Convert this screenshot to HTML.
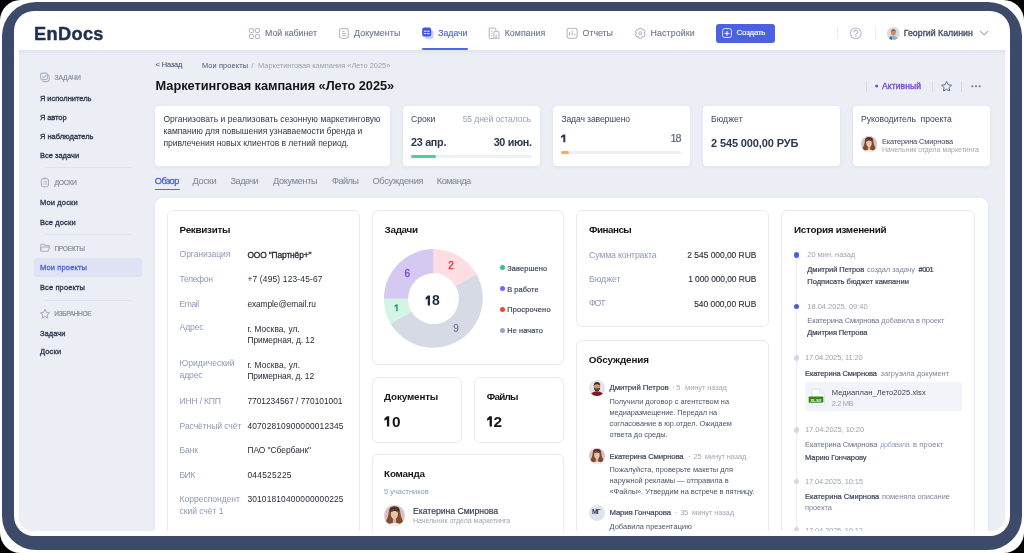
<!DOCTYPE html>
<html><head><meta charset="utf-8"><style>
html,body{margin:0;padding:0;width:1024px;height:553px;overflow:hidden;background:#000;position:relative}
body{font-family:"Liberation Sans",sans-serif}
.t{position:absolute;white-space:nowrap}
.page{position:absolute;left:0;top:0;width:1024px;height:553px;will-change:transform}
.corner{position:absolute;left:0;top:0;width:1024px;height:553px;background:#fff;border-radius:20.5px}
.frame{position:absolute;left:1.8px;top:2.4px;width:1020.4px;height:547.8px;background:#3e4a6a;border-radius:34px}
.screen{position:absolute;left:14px;top:11px;width:996px;height:525.4px;background:#fff;border-radius:20px}
.content{position:absolute;left:19px;top:50px;width:985.5px;height:480.8px;background:#eceef6;border-radius:0 0 14px 14px;box-shadow:inset 0 3px 5px -2px rgba(60,70,110,0.10)}
.clip{position:absolute;left:0;top:0;width:1024px;height:530.8px;overflow:hidden}
</style></head><body>
<div class="corner"></div>
<div class="page">
<div class="frame"></div>
<div class="screen"></div>
<div class="content"></div>
<div class="t" id="logo" style="left:34.00px;top:24.62px;font-size:18.2px;line-height:18.2px;color:#1f3050;font-weight:700;letter-spacing:0.351px;-webkit-text-stroke:0.45px #1f3050;">EnDocs</div>
<div class="t" id="n1" style="left:265.00px;top:28.65px;font-size:8.8px;line-height:8.8px;color:#6e7689;font-weight:400;letter-spacing:-0.007px;-webkit-text-stroke:0.12px #6e7689;">Мой кабинет</div>
<div class="t" id="n2" style="left:354.00px;top:28.65px;font-size:8.8px;line-height:8.8px;color:#6e7689;font-weight:400;letter-spacing:0.109px;-webkit-text-stroke:0.12px #6e7689;">Документы</div>
<div class="t" id="n3" style="left:438.30px;top:28.65px;font-size:8.8px;line-height:8.8px;color:#4a5fe0;font-weight:400;letter-spacing:-0.085px;-webkit-text-stroke:0.12px #4a5fe0;">Задачи</div>
<div class="t" id="n4" style="left:504.70px;top:28.65px;font-size:8.8px;line-height:8.8px;color:#6e7689;font-weight:400;letter-spacing:0.055px;-webkit-text-stroke:0.12px #6e7689;">Компания</div>
<div class="t" id="n5" style="left:582.60px;top:28.65px;font-size:8.8px;line-height:8.8px;color:#6e7689;font-weight:400;letter-spacing:-0.018px;-webkit-text-stroke:0.12px #6e7689;">Отчеты</div>
<div class="t" id="n6" style="left:650.60px;top:28.65px;font-size:8.8px;line-height:8.8px;color:#6e7689;font-weight:400;letter-spacing:0.109px;-webkit-text-stroke:0.12px #6e7689;">Настройки</div>
<div style="position:absolute;left:422.00px;top:48.00px;width:46.00px;height:2.00px;background:#5266e6;border-radius:1px"></div>
<div style="position:absolute;left:716.00px;top:23.60px;width:59.00px;height:19.40px;background:#4c60e2;border-radius:3px"></div>
<div class="t" id="n7" style="left:736.60px;top:29.37px;font-size:7.9px;line-height:7.9px;color:#ffffff;font-weight:400;letter-spacing:-0.190px;-webkit-text-stroke:0.15px #ffffff;">Создать</div>
<div style="position:absolute;left:837.00px;top:27.00px;width:1.00px;height:12.00px;background:#e8eaf0"></div>
<div style="position:absolute;left:874.50px;top:27.00px;width:1.00px;height:12.00px;background:#e8eaf0"></div>
<div class="t" id="user" style="left:903.80px;top:28.85px;font-size:8.8px;line-height:8.8px;color:#3b4560;font-weight:400;letter-spacing:-0.003px;-webkit-text-stroke:0.28px #3b4560;">Георгий Калинин</div>
<svg style="position:absolute;left:0;top:0" width="1024" height="60" viewBox="0 0 1024 60">
<g fill="none" stroke="#b0b7c8" stroke-width="1.05">
 <rect x="249.4" y="28.4" width="4" height="4" rx="1.2"/><rect x="255.4" y="28.4" width="4" height="4" rx="1.2"/>
 <rect x="249.4" y="34.4" width="4" height="4" rx="1.2"/><rect x="255.4" y="34.4" width="4" height="4" rx="1.2"/>
 <rect x="339.6" y="28.4" width="8.7" height="9.8" rx="2.2"/>
 <path d="M342 31.3h2.5M342 33.4h3.9M342 35.4h3.9"/>
 <path d="M495.8 30.6V29.6a1.6 1.6 0 0 0-1.6-1.6h-3.4a1.6 1.6 0 0 0-1.6 1.6v7.4a1.4 1.4 0 0 0 1.4 1.4h3.2M493.9 38.2V32.6a1.4 1.4 0 0 1 1.4-1.4h2.2a1.4 1.4 0 0 1 1.4 1.4v5.6zM496.2 38.2v-3.6M490.9 31h1.4M490.9 33.4h1.4M490.9 35.8h1.4"/>
 <rect x="567.1" y="28.2" width="10" height="10.1" rx="2.2"/>
 <path d="M569.6 32v3.6M572.2 30.6v5M574.7 33.5v2.1"/>
 <path d="M638.35 29.82 L639.15 28.23 L641.45 28.23 L642.25 29.82 L644.03 29.72 L645.18 31.71 L644.20 33.20 L645.18 34.69 L644.03 36.68 L642.25 36.58 L641.45 38.17 L639.15 38.17 L638.35 36.58 L636.57 36.68 L635.42 34.69 L636.40 33.20 L635.42 31.71 L636.57 29.72Z" stroke-linejoin="round"/>
 <circle cx="640.3" cy="33.2" r="1.5"/>
 <circle cx="855.8" cy="33.35" r="5.4"/>
 <path d="M854 31.9a1.9 1.9 0 1 1 2.7 1.7c-.6.3-.9.7-.9 1.3v.4M855.8 36.6v.3" stroke-linecap="round"/>
 <path d="M980.6 31.3l3.6 3.5 3.6-3.5" stroke="#9aa3b8" stroke-linecap="round"/>
</g>
<rect x="424.6" y="30" width="9" height="9" rx="2.2" fill="#c9d0fa"/>
<rect x="422.2" y="27.6" width="9" height="9" rx="2.2" fill="#3f56e0"/>
<path d="M424.3 31.2h1.8M427.4 31.2h1.8M424.3 33.6h1.8M427.4 33.6h1.8" stroke="#fff" stroke-width="0.9" stroke-linecap="round"/>
<rect x="722.6" y="28.6" width="8.8" height="8.9" rx="2" fill="none" stroke="#dfe4ff" stroke-width="1"/>
<path d="M727 31.4v4M725 33.4h4" stroke="#fff" stroke-width="1" stroke-linecap="round"/>
</svg>
<svg style="position:absolute;left:886.9px;top:26.9px" width="12.8" height="12.8" viewBox="0 0 20 20">
<defs><clipPath id="ca1"><circle cx="10" cy="10" r="10"/></clipPath></defs>
<g clip-path="url(#ca1)"><rect width="20" height="20" fill="#d9d9de"/>
<path d="M3 21c0-5 3-7 7-7s7 2 7 7z" fill="#8fb0cf"/><path d="M3 21c0-5 2-6 4-6.5L8 21z" fill="#4a5a70"/>
<ellipse cx="10" cy="9" rx="3.6" ry="4.3" fill="#c98a5e"/><path d="M6.3 8c0-3 1.6-4.3 3.7-4.3S13.7 5 13.7 8c-1-1.6-2-2-3.7-2s-2.7.4-3.7 2z" fill="#7a4f33"/></g>
</svg>
<div class="t" id="s_h1" style="left:54.40px;top:74.81px;font-size:6.8px;line-height:6.8px;color:#868d9f;font-weight:400;letter-spacing:-0.076px;-webkit-text-stroke:0.2px #868d9f;">ЗАДАЧИ</div>
<div class="t" id="s1" style="left:39.90px;top:94.92px;font-size:7.5px;line-height:7.5px;color:#2b364e;font-weight:400;letter-spacing:-0.014px;-webkit-text-stroke:0.3px #2b364e;">Я исполнитель</div>
<div class="t" id="s2" style="left:39.90px;top:113.82px;font-size:7.5px;line-height:7.5px;color:#2b364e;font-weight:400;letter-spacing:-0.083px;-webkit-text-stroke:0.3px #2b364e;">Я автор</div>
<div class="t" id="s3" style="left:39.90px;top:132.82px;font-size:7.5px;line-height:7.5px;color:#2b364e;font-weight:400;letter-spacing:0.007px;-webkit-text-stroke:0.3px #2b364e;">Я наблюдатель</div>
<div class="t" id="s4" style="left:39.90px;top:151.82px;font-size:7.5px;line-height:7.5px;color:#2b364e;font-weight:400;letter-spacing:0.011px;-webkit-text-stroke:0.3px #2b364e;">Все задачи</div>
<div style="position:absolute;left:45.00px;top:167.00px;width:87.00px;height:1.00px;background:#e1e4ee"></div>
<div class="t" id="s_h2" style="left:54.40px;top:179.91px;font-size:6.8px;line-height:6.8px;color:#868d9f;font-weight:400;letter-spacing:-0.299px;-webkit-text-stroke:0.2px #868d9f;">ДОСКИ</div>
<div class="t" id="s5" style="left:39.90px;top:199.32px;font-size:7.5px;line-height:7.5px;color:#2b364e;font-weight:400;letter-spacing:0.155px;-webkit-text-stroke:0.3px #2b364e;">Мои доски</div>
<div class="t" id="s6" style="left:39.90px;top:218.72px;font-size:7.5px;line-height:7.5px;color:#2b364e;font-weight:400;letter-spacing:0.113px;-webkit-text-stroke:0.3px #2b364e;">Все доски</div>
<div style="position:absolute;left:45.00px;top:234.00px;width:87.00px;height:1.00px;background:#e1e4ee"></div>
<div class="t" id="s_h3" style="left:54.40px;top:246.05px;font-size:6.5px;line-height:6.5px;color:#868d9f;font-weight:400;letter-spacing:-0.191px;-webkit-text-stroke:0.2px #868d9f;">ПРОЕКТЫ</div>
<div style="position:absolute;left:34.00px;top:258.00px;width:108.40px;height:19.00px;background:#dee3f4;border-radius:3px"></div>
<div class="t" id="s7" style="left:39.90px;top:264.42px;font-size:7.5px;line-height:7.5px;color:#4a5fe0;font-weight:400;letter-spacing:0.156px;-webkit-text-stroke:0.3px #4a5fe0;">Мои проекты</div>
<div class="t" id="s8" style="left:39.90px;top:283.72px;font-size:7.5px;line-height:7.5px;color:#2b364e;font-weight:400;letter-spacing:0.126px;-webkit-text-stroke:0.3px #2b364e;">Все проекты</div>
<div style="position:absolute;left:45.00px;top:299.50px;width:87.00px;height:1.00px;background:#e1e4ee"></div>
<div class="t" id="s_h4" style="left:54.30px;top:311.15px;font-size:6.5px;line-height:6.5px;color:#868d9f;font-weight:400;letter-spacing:-0.335px;-webkit-text-stroke:0.2px #868d9f;">ИЗБРАННОЕ</div>
<div class="t" id="s9" style="left:39.90px;top:329.52px;font-size:7.5px;line-height:7.5px;color:#2b364e;font-weight:400;letter-spacing:0.056px;-webkit-text-stroke:0.3px #2b364e;">Задачи</div>
<div class="t" id="s10" style="left:39.90px;top:348.42px;font-size:7.5px;line-height:7.5px;color:#2b364e;font-weight:400;letter-spacing:0.183px;-webkit-text-stroke:0.3px #2b364e;">Доски</div>
<svg style="position:absolute;left:0;top:60px" width="60" height="270" viewBox="0 60 60 270">
<g fill="none" stroke="#a9b0c2" stroke-width="1.05" stroke-linejoin="round" stroke-linecap="round">
 <path d="M47.6 74.8a2 2 0 0 1 1.6 2v2.8a2 2 0 0 1-2 2H44a2 2 0 0 1-2-1.6"/>
 <rect x="40.6" y="73.1" width="6.8" height="6.5" rx="1.8"/>
 <path d="M42.6 76.6l1.2 1.1 2-2.2"/>
 <rect x="41.3" y="178.7" width="7.2" height="8" rx="1.6"/>
 <path d="M43.5 178.7v-.6h2.8v.6M43.3 181.8h.2M45.2 181.8h1.6M43.3 184h.2M45.2 184h1.6"/>
 <path d="M40.6 250.4v-5a1.2 1.2 0 0 1 1.2-1.2h2.4l1.2 1.4h3a1.2 1.2 0 0 1 1.2 1.2v.8M40.6 250.4l1.6-3.4h7.4l-1.6 4.2h-6.6a.8.8 0 0 1-.8-.8z"/>
 <path d="M45 309.4l1.4 2.9 3.1.4-2.3 2.2.6 3.1-2.8-1.5-2.8 1.5.6-3.1-2.3-2.2 3.1-.4z"/>
</g></svg>
<div class="t" id="back" style="left:155.60px;top:60.83px;font-size:7.4px;line-height:7.4px;color:#3d4a66;font-weight:400;letter-spacing:-0.131px;-webkit-text-stroke:0.05px #3d4a66;">&lt; Назад</div>
<div class="t" id="bc1" style="left:202.00px;top:61.83px;font-size:7.4px;line-height:7.4px;color:#4a5570;font-weight:400;letter-spacing:0.108px;">Мои проекты</div>
<div class="t" id="bc2" style="left:251.50px;top:61.53px;font-size:7.4px;line-height:7.4px;color:#9098a8;font-weight:400;letter-spacing:0.000px;">/</div>
<div class="t" id="bc3" style="left:258.10px;top:61.53px;font-size:7.4px;line-height:7.4px;color:#9aa1b0;font-weight:400;letter-spacing:0.014px;">Маркетинговая кампания «Лето 2025»</div>
<div class="t" id="title" style="left:155.60px;top:79.63px;font-size:12.8px;line-height:12.8px;color:#151515;font-weight:700;letter-spacing:-0.054px;">Маркетинговая кампания «Лето 2025»</div>
<div style="position:absolute;left:866.30px;top:80.50px;width:1.00px;height:11.70px;background:#d8dbe5"></div>
<div style="position:absolute;left:931.50px;top:80.50px;width:1.00px;height:11.70px;background:#d8dbe5"></div>
<div style="position:absolute;left:961.00px;top:80.50px;width:1.00px;height:11.70px;background:#d8dbe5"></div>
<svg style="position:absolute;left:870px;top:80px" width="12" height="12" viewBox="870 80 12 12"><circle cx="876.7" cy="86.1" r="1.5" fill="#7b4fd4"/></svg>
<div class="t" id="active" style="left:881.90px;top:82.28px;font-size:8.6px;line-height:8.6px;color:#7a4ed3;font-weight:400;letter-spacing:0.086px;-webkit-text-stroke:0.35px #7a4ed3;">Активный</div>
<svg style="position:absolute;left:930px;top:75px" width="60" height="22" viewBox="930 75 60 22">
<path d="M946.6 81.5l1.6 3.2 3.4.5-2.5 2.4.6 3.4-3.1-1.6-3.1 1.6.6-3.4-2.5-2.4 3.4-.5z" fill="none" stroke="#5d6782" stroke-width="1" stroke-linejoin="round"/>
<circle cx="972.3" cy="86.2" r="1" fill="#6b7388"/><circle cx="976" cy="86.2" r="1" fill="#6b7388"/><circle cx="979.7" cy="86.2" r="1" fill="#6b7388"/>
</svg>
<div style="position:absolute;left:154.90px;top:105.50px;width:235.60px;height:60.70px;background:#fff;border-radius:4px;box-shadow:0 1px 4px rgba(40,50,90,0.07)"></div>
<div style="position:absolute;left:402.90px;top:105.50px;width:137.00px;height:60.70px;background:#fff;border-radius:4px;box-shadow:0 1px 4px rgba(40,50,90,0.07)"></div>
<div style="position:absolute;left:552.90px;top:105.50px;width:137.00px;height:60.70px;background:#fff;border-radius:4px;box-shadow:0 1px 4px rgba(40,50,90,0.07)"></div>
<div style="position:absolute;left:702.90px;top:105.50px;width:137.00px;height:60.70px;background:#fff;border-radius:4px;box-shadow:0 1px 4px rgba(40,50,90,0.07)"></div>
<div style="position:absolute;left:852.90px;top:105.50px;width:137.00px;height:60.70px;background:#fff;border-radius:4px;box-shadow:0 1px 4px rgba(40,50,90,0.07)"></div>
<div class="t" id="d1" style="left:163.40px;top:115.49px;font-size:8.5px;line-height:8.5px;color:#2e3546;font-weight:400;letter-spacing:0.044px;">Организовать и реализовать сезонную маркетинговую</div>
<div class="t" id="d2" style="left:163.40px;top:127.39px;font-size:8.5px;line-height:8.5px;color:#2e3546;font-weight:400;letter-spacing:-0.024px;">кампанию для повышения узнаваемости бренда и</div>
<div class="t" id="d3" style="left:163.40px;top:139.19px;font-size:8.5px;line-height:8.5px;color:#2e3546;font-weight:400;letter-spacing:-0.010px;">привлечения новых клиентов в летний период.</div>
<div class="t" id="c1a" style="left:411.00px;top:114.98px;font-size:8.6px;line-height:8.6px;color:#3c4559;font-weight:400;letter-spacing:0.025px;">Сроки</div>
<div class="t" id="c1b" style="left:462.70px;top:114.98px;font-size:8.6px;line-height:8.6px;color:#9aa0ae;font-weight:400;letter-spacing:-0.112px;">55 дней осталось</div>
<div class="t" id="c1c" style="left:411.00px;top:136.99px;font-size:10.8px;line-height:10.8px;color:#2a3550;font-weight:700;letter-spacing:-0.291px;">23 апр.</div>
<div class="t" id="c1d" style="left:493.70px;top:136.99px;font-size:10.8px;line-height:10.8px;color:#2a3550;font-weight:700;letter-spacing:-0.345px;">30 июн.</div>
<div style="position:absolute;left:411.00px;top:154.90px;width:120.50px;height:3.00px;background:#eef0f5;border-radius:2px"></div>
<div style="position:absolute;left:411.00px;top:154.90px;width:24.90px;height:3.00px;background:#45d39a;border-radius:2px"></div>
<div class="t" id="c2a" style="left:561.40px;top:114.98px;font-size:8.6px;line-height:8.6px;color:#3c4559;font-weight:400;letter-spacing:-0.123px;">Задач завершено</div>
<svg style="position:absolute;left:0;top:0;overflow:visible" width="1" height="1"><path d="M563.30 134.50H565.30V142.30H563.30V136.84L561.00 137.93V136.22Z" fill="#2a3550"/></svg>
<div class="t" id="c2c" style="left:670.40px;top:133.49px;font-size:10.8px;line-height:10.8px;color:#5c6680;font-weight:400;letter-spacing:-0.838px;-webkit-text-stroke:0.2px #5c6680;">18</div>
<div style="position:absolute;left:561.40px;top:150.50px;width:120.10px;height:3.00px;background:#eef0f5;border-radius:2px"></div>
<div style="position:absolute;left:561.40px;top:150.50px;width:7.60px;height:3.00px;background:#ebb06c;border-radius:2px"></div>
<div class="t" id="c3a" style="left:711.00px;top:114.98px;font-size:8.6px;line-height:8.6px;color:#3c4559;font-weight:400;letter-spacing:0.103px;">Бюджет</div>
<div class="t" id="c3b" style="left:711.00px;top:137.86px;font-size:11px;line-height:11px;color:#2a3550;font-weight:700;letter-spacing:-0.126px;">2 545 000,00 РУБ</div>
<div class="t" id="c4a" style="left:861.00px;top:115.28px;font-size:8.6px;line-height:8.6px;color:#3c4559;font-weight:400;letter-spacing:-0.040px;">Руководитель&nbsp; проекта</div>
<div class="t" id="c4b" style="left:881.90px;top:137.66px;font-size:7.39px;line-height:7.39px;color:#3c4559;font-weight:400;letter-spacing:-0.088px;">Екатерина Смирнова</div>
<div class="t" id="c4c" style="left:881.90px;top:145.89px;font-size:7.0px;line-height:7.0px;color:#a0a6b4;font-weight:400;letter-spacing:-0.030px;">Начельник отдела маркетинга</div>
<svg style="position:absolute;left:861.00px;top:136.00px" width="16.2" height="16.2" viewBox="0 0 20 20">
<defs><clipPath id="cw1"><circle cx="10" cy="10" r="10"/></clipPath></defs>
<g clip-path="url(#cw1)"><rect width="20" height="20" fill="#dcc1c9"/>
<path d="M10 1.4C6.3 1.4 4.6 4 4.4 7.6 4.2 10.6 3 12.8 1.9 15.4 2.9 17 4.6 17.8 6.4 17.6L13.6 17.6C15.4 17.8 17.1 17 18.1 15.4 17 12.8 15.8 10.6 15.6 7.6 15.4 4 13.7 1.4 10 1.4Z" fill="#7e4d2e"/>
<ellipse cx="10" cy="4.2" rx="4.6" ry="2.8" fill="#4d3224"/>
<rect x="8.5" y="11.8" width="3" height="5" fill="#d9b09a"/>
<path d="M4.6 20.5c.8-2.6 2.8-3.9 5.4-3.9s4.6 1.3 5.4 3.9z" fill="#f0eaec"/>
<ellipse cx="9.9" cy="8.6" rx="3.4" ry="4.7" fill="#e8c4b0"/>
<path d="M6.7 7c.5-2.2 1.6-3.3 3.3-3.3s2.8 1.1 3.3 3.3c-.9-.9-2-1.4-3.3-1.4s-2.4.5-3.3 1.4z" fill="#4d3224"/>
</g></svg>
<div class="t" id="tb1" style="left:154.80px;top:176.70px;font-size:9.2px;line-height:9.2px;color:#4a5fe0;font-weight:400;letter-spacing:-0.515px;-webkit-text-stroke:0.3px #4a5fe0;">Обзор</div>
<div class="t" id="tb2" style="left:192.50px;top:176.70px;font-size:9.2px;line-height:9.2px;color:#868c9e;font-weight:400;letter-spacing:-0.252px;-webkit-text-stroke:0.1px #868c9e;">Доски</div>
<div class="t" id="tb3" style="left:230.60px;top:176.70px;font-size:9.2px;line-height:9.2px;color:#868c9e;font-weight:400;letter-spacing:-0.543px;-webkit-text-stroke:0.1px #868c9e;">Задачи</div>
<div class="t" id="tb4" style="left:273.10px;top:176.70px;font-size:9.2px;line-height:9.2px;color:#868c9e;font-weight:400;letter-spacing:-0.344px;-webkit-text-stroke:0.1px #868c9e;">Документы</div>
<div class="t" id="tb5" style="left:332.10px;top:176.70px;font-size:9.2px;line-height:9.2px;color:#868c9e;font-weight:400;letter-spacing:-0.613px;-webkit-text-stroke:0.1px #868c9e;">Файлы</div>
<div class="t" id="tb6" style="left:372.40px;top:176.70px;font-size:9.2px;line-height:9.2px;color:#868c9e;font-weight:400;letter-spacing:-0.256px;-webkit-text-stroke:0.1px #868c9e;">Обсуждения</div>
<div class="t" id="tb7" style="left:436.80px;top:176.70px;font-size:9.2px;line-height:9.2px;color:#868c9e;font-weight:400;letter-spacing:-0.513px;-webkit-text-stroke:0.1px #868c9e;">Команда</div>
<div style="position:absolute;left:154.80px;top:188.80px;width:24.80px;height:1.50px;background:#5266e6;border-radius:1px"></div>
<div class="clip">
<div style="position:absolute;left:154.60px;top:197.70px;width:833.40px;height:402.30px;background:#fff;border-radius:8px;box-shadow:0 0 3px rgba(50,60,100,0.06)"></div>
<div style="position:absolute;left:167.40px;top:210.00px;width:192.40px;height:430.00px;background:#fff;border:1px solid #e8eaf2;border-radius:6px;box-sizing:border-box"></div>
<div style="position:absolute;left:371.80px;top:210.30px;width:192.60px;height:154.30px;background:#fff;border:1px solid #e8eaf2;border-radius:6px;box-sizing:border-box"></div>
<div style="position:absolute;left:371.80px;top:377.00px;width:89.80px;height:65.50px;background:#fff;border:1px solid #e8eaf2;border-radius:6px;box-sizing:border-box"></div>
<div style="position:absolute;left:474.40px;top:377.00px;width:90.00px;height:65.50px;background:#fff;border:1px solid #e8eaf2;border-radius:6px;box-sizing:border-box"></div>
<div style="position:absolute;left:371.80px;top:454.30px;width:192.60px;height:185.70px;background:#fff;border:1px solid #e8eaf2;border-radius:6px;box-sizing:border-box"></div>
<div style="position:absolute;left:576.40px;top:210.30px;width:192.20px;height:117.10px;background:#fff;border:1px solid #e8eaf2;border-radius:6px;box-sizing:border-box"></div>
<div style="position:absolute;left:576.40px;top:340.00px;width:192.20px;height:300.00px;background:#fff;border:1px solid #e8eaf2;border-radius:6px;box-sizing:border-box"></div>
<div style="position:absolute;left:781.20px;top:210.30px;width:193.40px;height:429.70px;background:#fff;border:1px solid #e8eaf2;border-radius:6px;box-sizing:border-box"></div>
<div class="t" id="rq" style="left:179.60px;top:224.88px;font-size:9.87px;line-height:9.87px;color:#151515;font-weight:700;letter-spacing:-0.273px;">Реквизиты</div>
<div class="t" id="rl0" style="left:179.60px;top:249.98px;font-size:8.6px;line-height:8.6px;color:#8f99b6;font-weight:400;letter-spacing:-0.104px;">Организация</div>
<div class="t" id="rv0_0" style="left:247.40px;top:251.40px;font-size:8.4px;line-height:8.4px;color:#1f2430;font-weight:400;letter-spacing:-0.125px;-webkit-text-stroke:0.3px #1f2430;">ООО "Партнёр+"</div>
<div class="t" id="rl1" style="left:179.60px;top:275.28px;font-size:8.6px;line-height:8.6px;color:#8f99b6;font-weight:400;letter-spacing:-0.389px;">Телефон</div>
<div class="t" id="rv1_0" style="left:247.40px;top:275.40px;font-size:8.4px;line-height:8.4px;color:#1f2430;font-weight:400;letter-spacing:0.187px;">+7 (495) 123-45-67</div>
<div class="t" id="rl2" style="left:179.60px;top:300.48px;font-size:8.6px;line-height:8.6px;color:#8f99b6;font-weight:400;letter-spacing:-0.492px;">Email</div>
<div class="t" id="rv2_0" style="left:247.40px;top:300.10px;font-size:8.4px;line-height:8.4px;color:#1f2430;font-weight:400;letter-spacing:-0.095px;">example@email.ru</div>
<div class="t" id="rl3" style="left:179.60px;top:323.28px;font-size:8.6px;line-height:8.6px;color:#8f99b6;font-weight:400;letter-spacing:-0.145px;">Адрес</div>
<div class="t" id="rv3_0" style="left:247.40px;top:324.80px;font-size:8.4px;line-height:8.4px;color:#1f2430;font-weight:400;letter-spacing:0.105px;">г. Москва, ул.</div>
<div class="t" id="rv3_1" style="left:247.40px;top:336.20px;font-size:8.4px;line-height:8.4px;color:#1f2430;font-weight:400;letter-spacing:-0.033px;">Примерная, д. 12</div>
<div class="t" id="rl4" style="left:179.60px;top:359.08px;font-size:8.6px;line-height:8.6px;color:#8f99b6;font-weight:400;letter-spacing:0.003px;">Юридический</div>
<div class="t" id="rv4_0" style="left:247.40px;top:360.50px;font-size:8.4px;line-height:8.4px;color:#1f2430;font-weight:400;letter-spacing:0.124px;">г. Москва, ул.</div>
<div class="t" id="rv4_1" style="left:247.40px;top:372.30px;font-size:8.4px;line-height:8.4px;color:#1f2430;font-weight:400;letter-spacing:-0.070px;">Примерная, д. 12</div>
<div class="t" id="rl5" style="left:179.60px;top:396.88px;font-size:8.6px;line-height:8.6px;color:#8f99b6;font-weight:400;letter-spacing:-0.221px;">ИНН / КПП</div>
<div class="t" id="rv5_0" style="left:247.40px;top:397.00px;font-size:8.4px;line-height:8.4px;color:#1f2430;font-weight:400;letter-spacing:-0.017px;">7701234567 / 770101001</div>
<div class="t" id="rl6" style="left:179.60px;top:421.98px;font-size:8.6px;line-height:8.6px;color:#8f99b6;font-weight:400;letter-spacing:-0.106px;">Расчётный счёт</div>
<div class="t" id="rv6_0" style="left:247.40px;top:421.80px;font-size:8.4px;line-height:8.4px;color:#1f2430;font-weight:400;letter-spacing:0.157px;">40702810900000012345</div>
<div class="t" id="rl7" style="left:179.60px;top:446.08px;font-size:8.6px;line-height:8.6px;color:#8f99b6;font-weight:400;letter-spacing:-0.192px;">Банк</div>
<div class="t" id="rv7_0" style="left:247.40px;top:446.10px;font-size:8.4px;line-height:8.4px;color:#1f2430;font-weight:400;letter-spacing:-0.013px;">ПАО "Сбербанк"</div>
<div class="t" id="rl8" style="left:179.60px;top:470.78px;font-size:8.6px;line-height:8.6px;color:#8f99b6;font-weight:400;letter-spacing:-0.637px;">БИК</div>
<div class="t" id="rv8_0" style="left:247.40px;top:470.60px;font-size:8.4px;line-height:8.4px;color:#1f2430;font-weight:400;letter-spacing:0.271px;">044525225</div>
<div class="t" id="rl9" style="left:179.60px;top:495.18px;font-size:8.6px;line-height:8.6px;color:#8f99b6;font-weight:400;letter-spacing:-0.062px;">Корреспондент</div>
<div class="t" id="rv9_0" style="left:247.40px;top:495.00px;font-size:8.4px;line-height:8.4px;color:#1f2430;font-weight:400;letter-spacing:0.157px;">30101810400000000225</div>
<div class="t" id="rl_adr" style="left:179.60px;top:370.58px;font-size:8.6px;line-height:8.6px;color:#8f99b6;font-weight:400;letter-spacing:-0.162px;">адрес</div>
<div class="t" id="rl_ks" style="left:179.60px;top:506.98px;font-size:8.6px;line-height:8.6px;color:#8f99b6;font-weight:400;letter-spacing:-0.079px;">ский счёт 1</div>
<div class="t" id="zt" style="left:384.60px;top:224.98px;font-size:9.87px;line-height:9.87px;color:#151515;font-weight:700;letter-spacing:-0.299px;">Задачи</div>
<svg style="position:absolute;left:0;top:0" width="1024" height="553"><path d="M433.50 249.10A49.6 49.6 0 0 1 476.45 273.90L455.50 286.00A25.4 25.4 0 0 0 433.50 273.30Z" fill="#ffdde2"/><path d="M476.45 273.90A49.6 49.6 0 0 1 390.55 323.50L411.50 311.40A25.4 25.4 0 0 0 455.50 286.00Z" fill="#d6dae4"/><path d="M390.55 323.50A49.6 49.6 0 0 1 383.90 298.70L408.10 298.70A25.4 25.4 0 0 0 411.50 311.40Z" fill="#d2f5e6"/><path d="M383.90 298.70A49.6 49.6 0 0 1 433.50 249.10L433.50 273.30A25.4 25.4 0 0 0 408.10 298.70Z" fill="#d6c9f1"/></svg>
<div class="t" id="dn6" style="left:404.60px;top:268.69px;font-size:10px;line-height:10px;color:#7a4fd0;font-weight:400;letter-spacing:0.000px;-webkit-text-stroke:0.4px #7a4fd0;">6</div>
<div class="t" id="dn2" style="left:448.20px;top:261.39px;font-size:10px;line-height:10px;color:#e5393f;font-weight:400;letter-spacing:0.000px;-webkit-text-stroke:0.4px #e5393f;">2</div>
<svg style="position:absolute;left:0;top:0;overflow:visible" width="1" height="1"><path d="M396.20 304.20H397.70V311.20H396.20V306.30L394.50 307.28V305.74Z" fill="#2a9d6a"/></svg>
<div class="t" id="dn9" style="left:453.30px;top:323.89px;font-size:10px;line-height:10px;color:#6b7590;font-weight:400;letter-spacing:0.000px;-webkit-text-stroke:0.15px #6b7590;">9</div>
<svg style="position:absolute;left:0;top:0;overflow:visible" width="1" height="1"><path d="M427.70 295.60H430.00V305.40H427.70V298.54L425.60 299.91V297.76Z" fill="#1e2a45"/></svg>
<div class="t" id="dn18" style="left:432.10px;top:293.47px;font-size:14px;line-height:14px;color:#1e2a45;font-weight:700;letter-spacing:0.000px;">8</div>
<div style="position:absolute;left:499.50px;top:265.30px;width:5px;height:5px;border-radius:50%;background:#34c48a"></div>
<div class="t" id="lg0" style="left:507.20px;top:264.53px;font-size:7.4px;line-height:7.4px;color:#3c4559;font-weight:400;letter-spacing:0.117px;-webkit-text-stroke:0.2px #3c4559;">Завершено</div>
<div style="position:absolute;left:499.50px;top:286.30px;width:5px;height:5px;border-radius:50%;background:#8b5cf6"></div>
<div class="t" id="lg1" style="left:507.20px;top:285.53px;font-size:7.4px;line-height:7.4px;color:#3c4559;font-weight:400;letter-spacing:0.073px;-webkit-text-stroke:0.2px #3c4559;">В работе</div>
<div style="position:absolute;left:499.50px;top:307.10px;width:5px;height:5px;border-radius:50%;background:#f04438"></div>
<div class="t" id="lg2" style="left:507.20px;top:306.33px;font-size:7.4px;line-height:7.4px;color:#3c4559;font-weight:400;letter-spacing:0.210px;-webkit-text-stroke:0.2px #3c4559;">Просрочено</div>
<div style="position:absolute;left:499.50px;top:328.20px;width:5px;height:5px;border-radius:50%;background:#9aa3b8"></div>
<div class="t" id="lg3" style="left:507.20px;top:327.43px;font-size:7.4px;line-height:7.4px;color:#3c4559;font-weight:400;letter-spacing:0.106px;-webkit-text-stroke:0.2px #3c4559;">Не начато</div>
<div class="t" id="dk" style="left:384.10px;top:391.68px;font-size:9.87px;line-height:9.87px;color:#151515;font-weight:700;letter-spacing:-0.158px;">Документы</div>
<svg style="position:absolute;left:0;top:0;overflow:visible" width="1" height="1"><path d="M386.90 416.30H389.20V426.60H386.90V419.39L384.40 420.83V418.57Z" fill="#151515"/></svg>
<div class="t" id="dkn" style="left:392.00px;top:413.79px;font-size:15.4px;line-height:15.4px;color:#151515;font-weight:700;letter-spacing:0.000px;">0</div>
<div class="t" id="fl" style="left:486.80px;top:391.68px;font-size:9.87px;line-height:9.87px;color:#151515;font-weight:700;letter-spacing:-0.731px;">Файлы</div>
<svg style="position:absolute;left:0;top:0;overflow:visible" width="1" height="1"><path d="M489.60 416.30H491.90V426.60H489.60V419.39L487.10 420.83V418.57Z" fill="#151515"/></svg>
<div class="t" id="fln" style="left:493.60px;top:413.79px;font-size:15.4px;line-height:15.4px;color:#151515;font-weight:700;letter-spacing:0.000px;">2</div>
<div class="t" id="km" style="left:384.10px;top:469.18px;font-size:9.87px;line-height:9.87px;color:#151515;font-weight:700;letter-spacing:-0.222px;">Команда</div>
<div class="t" id="kmc" style="left:384.10px;top:488.13px;font-size:7.4px;line-height:7.4px;color:#8f99b6;font-weight:400;letter-spacing:0.001px;">5 участников</div>
<svg style="position:absolute;left:383.70px;top:505.10px" width="21" height="21" viewBox="0 0 20 20">
<defs><clipPath id="cw2"><circle cx="10" cy="10" r="10"/></clipPath></defs>
<g clip-path="url(#cw2)"><rect width="20" height="20" fill="#dcc1c9"/>
<path d="M10 1.4C6.3 1.4 4.6 4 4.4 7.6 4.2 10.6 3 12.8 1.9 15.4 2.9 17 4.6 17.8 6.4 17.6L13.6 17.6C15.4 17.8 17.1 17 18.1 15.4 17 12.8 15.8 10.6 15.6 7.6 15.4 4 13.7 1.4 10 1.4Z" fill="#7e4d2e"/>
<ellipse cx="10" cy="4.2" rx="4.6" ry="2.8" fill="#4d3224"/>
<rect x="8.5" y="11.8" width="3" height="5" fill="#d9b09a"/>
<path d="M4.6 20.5c.8-2.6 2.8-3.9 5.4-3.9s4.6 1.3 5.4 3.9z" fill="#f0eaec"/>
<ellipse cx="9.9" cy="8.6" rx="3.4" ry="4.7" fill="#e8c4b0"/>
<path d="M6.7 7c.5-2.2 1.6-3.3 3.3-3.3s2.8 1.1 3.3 3.3c-.9-.9-2-1.4-3.3-1.4s-2.4.5-3.3 1.4z" fill="#4d3224"/>
</g></svg>
<div class="t" id="kmn" style="left:413.00px;top:507.25px;font-size:8.73px;line-height:8.73px;color:#3c4559;font-weight:400;letter-spacing:-0.058px;-webkit-text-stroke:0.2px #3c4559;">Екатерина Смирнова</div>
<div class="t" id="kmp" style="left:413.00px;top:518.14px;font-size:7.12px;line-height:7.12px;color:#a0a6b8;font-weight:400;letter-spacing:-0.080px;">Начельник отдела маркетинга</div>
<div class="t" id="fn" style="left:589.10px;top:225.18px;font-size:9.87px;line-height:9.87px;color:#151515;font-weight:700;letter-spacing:-0.517px;">Финансы</div>
<div class="t" id="ql0" style="left:589.10px;top:250.55px;font-size:8.8px;line-height:8.8px;color:#8f99b6;font-weight:400;letter-spacing:-0.200px;">Сумма контракта</div>
<div class="t" id="qv0" style="right:267.70px;top:250.85px;font-size:8.45px;line-height:8.45px;color:#2a2f3c;font-weight:400;letter-spacing:-0.030px;-webkit-text-stroke:0.12px #2a2f3c;">2 545 000,00 RUB</div>
<div class="t" id="ql1" style="left:589.10px;top:274.85px;font-size:8.8px;line-height:8.8px;color:#8f99b6;font-weight:400;letter-spacing:-0.074px;">Бюджет</div>
<div class="t" id="qv1" style="right:267.70px;top:275.15px;font-size:8.45px;line-height:8.45px;color:#2a2f3c;font-weight:400;letter-spacing:-0.080px;-webkit-text-stroke:0.12px #2a2f3c;">1 000 000,00 RUB</div>
<div class="t" id="ql2" style="left:589.10px;top:299.35px;font-size:8.8px;line-height:8.8px;color:#8f99b6;font-weight:400;letter-spacing:-1.205px;">ФОТ</div>
<div class="t" id="qv2" style="right:267.70px;top:299.65px;font-size:8.45px;line-height:8.45px;color:#2a2f3c;font-weight:400;letter-spacing:-0.017px;-webkit-text-stroke:0.12px #2a2f3c;">540 000,00 RUB</div>
<div class="t" id="ob" style="left:588.80px;top:355.38px;font-size:9.87px;line-height:9.87px;color:#151515;font-weight:700;letter-spacing:-0.120px;">Обсуждения</div>
<svg style="position:absolute;left:589.00px;top:379.60px" width="16" height="16" viewBox="0 0 20 20">
<defs><clipPath id="cm1"><circle cx="10" cy="10" r="10"/></clipPath></defs>
<g clip-path="url(#cm1)"><rect width="20" height="20" fill="#e2e4e8"/>
<path d="M1 21c.3-4 3.5-6.6 9-6.6s8.7 2.6 9 6.6z" fill="#7b1727"/>
<rect x="8.3" y="11.5" width="3.4" height="3.6" fill="#c08a6c"/>
<ellipse cx="10" cy="8.4" rx="3.9" ry="4.9" fill="#c99478"/>
<path d="M6.1 9.3c.3 3.5 1.8 5.4 3.9 5.4s3.6-1.9 3.9-5.4c-1 .9-2.3 1.4-3.9 1.4s-2.9-.5-3.9-1.4z" fill="#5a3b2c"/>
<path d="M5.9 7.8C5.8 4.1 7.6 2.5 10 2.5s4.2 1.6 4.1 5.3c-.8-1.7-2.2-2.4-4.1-2.4s-3.3.7-4.1 2.4z" fill="#3a2a22"/>
</g></svg>
<div class="t" id="o1n" style="left:609.50px;top:384.08px;font-size:7.79px;line-height:7.79px;color:#3c4559;font-weight:400;letter-spacing:-0.051px;-webkit-text-stroke:0.2px #3c4559;">Дмитрий Петров</div>
<div class="t" id="o1d" style="left:672.60px;top:384.29px;font-size:7.54px;line-height:7.54px;color:#a3a9b6;font-weight:400;letter-spacing:-0.977px;">·&nbsp; 5</div>
<div class="t" id="o1t" style="left:685.10px;top:384.29px;font-size:7.54px;line-height:7.54px;color:#a3a9b6;font-weight:400;letter-spacing:-0.128px;">минут назад</div>
<div class="t" id="o1b0" style="left:609.50px;top:397.81px;font-size:7.41px;line-height:7.41px;color:#4a5368;font-weight:400;letter-spacing:0.005px;">Получили договор с агентством на</div>
<div class="t" id="o1b1" style="left:609.50px;top:408.81px;font-size:7.41px;line-height:7.41px;color:#4a5368;font-weight:400;letter-spacing:-0.071px;">медиаразмещение. Передал на</div>
<div class="t" id="o1b2" style="left:609.50px;top:419.71px;font-size:7.41px;line-height:7.41px;color:#4a5368;font-weight:400;letter-spacing:-0.024px;">согласование в юр.отдел. Ожидаем</div>
<div class="t" id="o1b3" style="left:609.50px;top:430.71px;font-size:7.41px;line-height:7.41px;color:#4a5368;font-weight:400;letter-spacing:-0.028px;">ответа до среды.</div>
<svg style="position:absolute;left:589.00px;top:447.50px" width="16" height="16" viewBox="0 0 20 20">
<defs><clipPath id="cw3"><circle cx="10" cy="10" r="10"/></clipPath></defs>
<g clip-path="url(#cw3)"><rect width="20" height="20" fill="#dcc1c9"/>
<path d="M10 1.4C6.3 1.4 4.6 4 4.4 7.6 4.2 10.6 3 12.8 1.9 15.4 2.9 17 4.6 17.8 6.4 17.6L13.6 17.6C15.4 17.8 17.1 17 18.1 15.4 17 12.8 15.8 10.6 15.6 7.6 15.4 4 13.7 1.4 10 1.4Z" fill="#7e4d2e"/>
<ellipse cx="10" cy="4.2" rx="4.6" ry="2.8" fill="#4d3224"/>
<rect x="8.5" y="11.8" width="3" height="5" fill="#d9b09a"/>
<path d="M4.6 20.5c.8-2.6 2.8-3.9 5.4-3.9s4.6 1.3 5.4 3.9z" fill="#f0eaec"/>
<ellipse cx="9.9" cy="8.6" rx="3.4" ry="4.7" fill="#e8c4b0"/>
<path d="M6.7 7c.5-2.2 1.6-3.3 3.3-3.3s2.8 1.1 3.3 3.3c-.9-.9-2-1.4-3.3-1.4s-2.4.5-3.3 1.4z" fill="#4d3224"/>
</g></svg>
<div class="t" id="o2n" style="left:609.50px;top:452.68px;font-size:7.79px;line-height:7.79px;color:#3c4559;font-weight:400;letter-spacing:-0.155px;-webkit-text-stroke:0.2px #3c4559;">Екатерина Смирнова</div>
<div class="t" id="o2d" style="left:688.00px;top:452.89px;font-size:7.54px;line-height:7.54px;color:#a3a9b6;font-weight:400;letter-spacing:-0.371px;">·&nbsp; 25</div>
<div class="t" id="o2t" style="left:704.80px;top:452.89px;font-size:7.54px;line-height:7.54px;color:#a3a9b6;font-weight:400;letter-spacing:-0.148px;">минут назад</div>
<div class="t" id="o2b0" style="left:609.50px;top:465.91px;font-size:7.41px;line-height:7.41px;color:#4a5368;font-weight:400;letter-spacing:0.022px;">Пожалуйста, проверьте макеты для</div>
<div class="t" id="o2b1" style="left:609.50px;top:477.01px;font-size:7.41px;line-height:7.41px;color:#4a5368;font-weight:400;letter-spacing:-0.011px;">наружной рекламы — отправила в</div>
<div class="t" id="o2b2" style="left:609.50px;top:487.91px;font-size:7.41px;line-height:7.41px;color:#4a5368;font-weight:400;letter-spacing:-0.022px;">«Файлы». Утвердим на встрече в пятницу.</div>
<div style="position:absolute;left:589px;top:504.6px;width:16px;height:16px;border-radius:50%;background:#dfe3ec"></div>
<div class="t" id="mg" style="left:592.00px;top:509.11px;font-size:6.8px;line-height:6.8px;color:#2e3a55;font-weight:700;letter-spacing:-0.853px;">МГ</div>
<div class="t" id="o3n" style="left:609.50px;top:509.28px;font-size:7.79px;line-height:7.79px;color:#3c4559;font-weight:400;letter-spacing:-0.154px;-webkit-text-stroke:0.2px #3c4559;">Мария Гончарова</div>
<div class="t" id="o3d" style="left:674.80px;top:509.49px;font-size:7.54px;line-height:7.54px;color:#a3a9b6;font-weight:400;letter-spacing:-0.448px;">·&nbsp; 35</div>
<div class="t" id="o3t" style="left:692.10px;top:509.49px;font-size:7.54px;line-height:7.54px;color:#a3a9b6;font-weight:400;letter-spacing:-0.122px;">минут назад</div>
<div class="t" id="o3b0" style="left:609.50px;top:522.71px;font-size:7.41px;line-height:7.41px;color:#4a5368;font-weight:400;letter-spacing:0.066px;">Добавила презентацию</div>
<div class="t" id="hs" style="left:793.90px;top:224.78px;font-size:9.87px;line-height:9.87px;color:#151515;font-weight:700;letter-spacing:-0.260px;">История изменений</div>
<div style="position:absolute;left:795.60px;top:258.00px;width:1.00px;height:342.00px;background:#eceef5"></div>
<div style="position:absolute;left:793.50px;top:252.40px;width:5.2px;height:5.2px;border-radius:50%;background:#4a5fe0"></div>
<div style="position:absolute;left:793.50px;top:303.60px;width:5.2px;height:5.2px;border-radius:50%;background:#4a5fe0"></div>
<div style="position:absolute;left:793.50px;top:355.40px;width:5.2px;height:5.2px;border-radius:50%;background:#d5d9e3"></div>
<div style="position:absolute;left:793.50px;top:427.40px;width:5.2px;height:5.2px;border-radius:50%;background:#d5d9e3"></div>
<div style="position:absolute;left:793.50px;top:478.80px;width:5.2px;height:5.2px;border-radius:50%;background:#d5d9e3"></div>
<div style="position:absolute;left:793.50px;top:527.00px;width:5.2px;height:5.2px;border-radius:50%;background:#d5d9e3"></div>
<div class="t" id="h1a" style="left:807.30px;top:251.09px;font-size:7.54px;line-height:7.54px;color:#9ea4b2;font-weight:400;letter-spacing:-0.050px;">20 мин. назад</div>
<div class="t" id="h1b" style="left:807.30px;top:266.46px;font-size:7.52px;line-height:7.52px;color:#3a4357;font-weight:400;letter-spacing:-0.065px;-webkit-text-stroke:0.2px #3a4357;">Дмитрий Петров</div>
<div class="t" id="h1c" style="left:866.80px;top:266.46px;font-size:7.52px;line-height:7.52px;color:#80879a;font-weight:400;letter-spacing:-0.142px;">создал задачу</div>
<div class="t" id="h1d" style="left:918.50px;top:266.46px;font-size:7.52px;line-height:7.52px;color:#3a4357;font-weight:400;letter-spacing:-0.538px;-webkit-text-stroke:0.2px #3a4357;">#001</div>
<div class="t" id="h1e" style="left:807.30px;top:278.16px;font-size:7.52px;line-height:7.52px;color:#3a4357;font-weight:400;letter-spacing:0.000px;-webkit-text-stroke:0.2px #3a4357;">Подписать бюджет кампании</div>
<div class="t" id="h2a" style="left:807.30px;top:302.79px;font-size:7.54px;line-height:7.54px;color:#9ea4b2;font-weight:400;letter-spacing:-0.021px;">18.04.2025, 09:40</div>
<div class="t" id="h2b" style="left:807.30px;top:317.46px;font-size:7.52px;line-height:7.52px;color:#6b7286;font-weight:400;letter-spacing:-0.135px;">Екатерина Смирнова</div>
<div class="t" id="h2c" style="left:881.30px;top:317.46px;font-size:7.52px;line-height:7.52px;color:#80879a;font-weight:400;letter-spacing:-0.123px;">добавила в проект</div>
<div class="t" id="h2d" style="left:807.30px;top:329.16px;font-size:7.52px;line-height:7.52px;color:#3a4357;font-weight:400;letter-spacing:-0.113px;-webkit-text-stroke:0.2px #3a4357;">Дмитрия Петрова</div>
<div class="t" id="h3a" style="left:805.00px;top:353.99px;font-size:7.54px;line-height:7.54px;color:#9ea4b2;font-weight:400;letter-spacing:-0.152px;">17.04.2025, 11:20</div>
<div class="t" id="h3b" style="left:805.00px;top:369.56px;font-size:7.52px;line-height:7.52px;color:#3a4357;font-weight:400;letter-spacing:-0.134px;-webkit-text-stroke:0.2px #3a4357;">Екатерина Смирнова</div>
<div class="t" id="h3c" style="left:880.60px;top:369.56px;font-size:7.52px;line-height:7.52px;color:#80879a;font-weight:400;letter-spacing:-0.031px;">загрузила документ</div>
<div style="position:absolute;left:805.00px;top:382.10px;width:157.20px;height:29.30px;background:#f2f4fa;border-radius:3px"></div>
<svg style="position:absolute;left:806px;top:386px" width="22" height="22" viewBox="806 386 22 22">
<path d="M812 389.2h7.6l4.7 4.6v10.6a1 1 0 0 1-1 1H813a1 1 0 0 1-1-1z" fill="#fff" stroke="#dde1ea" stroke-width=".9"/>
<path d="M819.6 389.2v3.6a1 1 0 0 0 1 1h3.7" fill="none" stroke="#dde1ea" stroke-width=".9"/>
<rect x="808.7" y="396.5" width="14.6" height="6.3" rx=".8" fill="#2f8a12"/>
<text x="816" y="401.6" font-family="Liberation Sans" font-size="4.2" font-weight="700" fill="#fff" text-anchor="middle">XLSX</text>
</svg>
<div class="t" id="h3d" style="left:831.80px;top:389.19px;font-size:7.54px;line-height:7.54px;color:#3a4357;font-weight:400;letter-spacing:0.066px;">Медиаплан_Лето2025.xlsx</div>
<div class="t" id="h3e" style="left:831.80px;top:399.99px;font-size:7.54px;line-height:7.54px;color:#9ea4b2;font-weight:400;letter-spacing:-0.412px;">2.2 MB</div>
<div class="t" id="h4a" style="left:805.00px;top:425.99px;font-size:7.54px;line-height:7.54px;color:#9ea4b2;font-weight:400;letter-spacing:-0.103px;">17.04.2025, 10:20</div>
<div class="t" id="h4b" style="left:805.00px;top:441.36px;font-size:7.52px;line-height:7.52px;color:#6b7286;font-weight:400;letter-spacing:-0.111px;">Екатерина Смирнова</div>
<div class="t" id="h4c" style="left:880.20px;top:441.36px;font-size:7.52px;line-height:7.52px;color:#9aa6c6;font-weight:400;letter-spacing:-0.580px;">добавила</div>
<div class="t" id="h4d" style="left:913.00px;top:441.36px;font-size:7.52px;line-height:7.52px;color:#80879a;font-weight:400;letter-spacing:0.146px;">в проект</div>
<div class="t" id="h4e" style="left:805.00px;top:453.56px;font-size:7.52px;line-height:7.52px;color:#3a4357;font-weight:400;letter-spacing:-0.069px;-webkit-text-stroke:0.2px #3a4357;">Марию Гончарову</div>
<div class="t" id="h5a" style="left:805.00px;top:477.69px;font-size:7.54px;line-height:7.54px;color:#9ea4b2;font-weight:400;letter-spacing:-0.181px;">17.04.2025, 10:15</div>
<div class="t" id="h5b" style="left:805.00px;top:492.96px;font-size:7.52px;line-height:7.52px;color:#3a4357;font-weight:400;letter-spacing:0.002px;-webkit-text-stroke:0.2px #3a4357;">Екатерина Смирнова</div>
<div class="t" id="h5c" style="left:881.90px;top:492.96px;font-size:7.52px;line-height:7.52px;color:#80879a;font-weight:400;letter-spacing:-0.084px;">поменяла описание</div>
<div class="t" id="h5d" style="left:805.00px;top:504.46px;font-size:7.52px;line-height:7.52px;color:#80879a;font-weight:400;letter-spacing:-0.119px;">проекта</div>
<div class="t" id="h6a" style="left:805.00px;top:526.69px;font-size:7.54px;line-height:7.54px;color:#9ea4b2;font-weight:400;letter-spacing:-0.169px;">17.04.2025, 10:12</div>
</div>
</div>
</body></html>
